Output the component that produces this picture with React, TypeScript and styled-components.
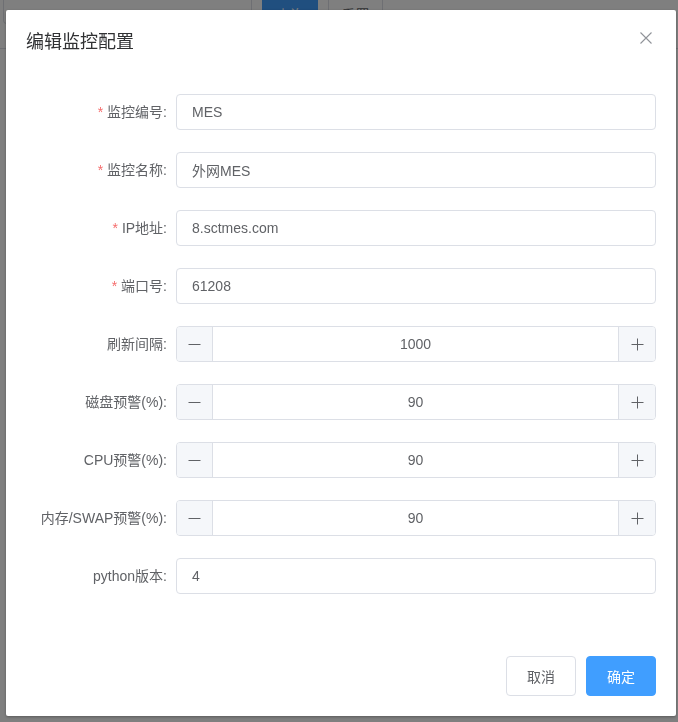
import React from "react";
import styled, { createGlobalStyle } from "styled-components";

const Global = createGlobalStyle`
  html, body { margin: 0; padding: 0; background: #fff; }
  body {
    font-family: "Liberation Sans", "Noto Sans CJK SC", sans-serif;
    width: 678px; height: 722px; overflow: hidden;
  }
  * { box-sizing: border-box; }
`;

const Page = styled.div`
  width: 678px;
  height: 722px;
  background: #fff;
`;

const SearchBar = styled.div`
  height: 49px;
  border-bottom: 1px solid #dcdfe6;
  display: flex;
  align-items: flex-start;
  padding-left: 3px;
  gap: 10px;
`;

const BgInput = styled.div`
  width: 249px;
  height: 24px;
  border: 1px solid #dcdfe6;
  border-top: none;
  border-radius: 0 0 4px 4px;
`;

const BgButtons = styled.div`
  display: flex;
  align-items: flex-start;
  gap: 10px;
`;

const BgButton = styled.div<{ $primary?: boolean }>`
  width: ${(p) => (p.$primary ? 56 : 55)}px;
  height: 26px;
  border: 1px solid ${(p) => (p.$primary ? "#409eff" : "#dcdfe6")};
  border-top: none;
  background: ${(p) => (p.$primary ? "#409eff" : "#fff")};
  color: ${(p) => (p.$primary ? "#fff" : "#606266")};
  border-radius: 0 0 3px 3px;
  font-size: 14px;
  display: flex;
  align-items: center;
  justify-content: center;
  padding-top: 2px;
`;

const Overlay = styled.div`
  position: fixed;
  inset: 0;
  background: rgba(0, 0, 0, 0.5);
  display: flex;
  justify-content: flex-start;
  align-items: flex-start;
  padding: 10px 0 0 6px;
`;

const Dialog = styled.div`
  width: 670px;
  background: #fff;
  border-radius: 2px;
  box-shadow: 0 1px 3px rgba(0, 0, 0, 0.3);
`;

const Header = styled.div`
  padding: 20px 20px 10px;
  display: flex;
  align-items: flex-start;
  justify-content: space-between;
`;

const Title = styled.span`
  font-size: 18px;
  line-height: 24px;
  color: #303133;
`;

const Close = styled.button`
  border: none;
  background: none;
  padding: 0;
  width: 16px;
  height: 16px;
  display: flex;
  align-items: center;
  justify-content: center;
  cursor: pointer;
  margin-top: 0;
  margin-right: 2px;
`;

const Body = styled.div`
  padding: 30px 20px;
`;

const Item = styled.div`
  display: flex;
  align-items: center;
  margin-bottom: 22px;
  height: 36px;
`;

const Label = styled.label`
  width: 150px;
  padding-right: 9px;
  text-align: right;
  font-size: 14px;
  color: #606266;
  line-height: 36px;
  white-space: nowrap;
`;

const Star = styled.span`
  color: #f56c6c;
  margin-right: 4px;
`;

const Input = styled.input`
  flex: 1;
  height: 36px;
  border: 1px solid #dcdfe6;
  border-radius: 4px;
  padding: 0 15px;
  font-size: 14px;
  color: #606266;
  font-family: inherit;
  outline: none;
  background: #fff;
`;

const NumberBox = styled.div`
  flex: 1;
  height: 36px;
  border: 1px solid #dcdfe6;
  border-radius: 4px;
  display: flex;
  overflow: hidden;
`;

const Step = styled.span<{ $side: "left" | "right" }>`
  width: ${(p) => (p.$side === "left" ? 36 : 37)}px;
  background: #f5f7fa;
  display: flex;
  align-items: center;
  justify-content: center;
  ${(p) => (p.$side === "left" ? "border-right" : "border-left")}: 1px solid #dcdfe6;
`;

const NumberValue = styled.span`
  flex: 1;
  text-align: center;
  font-size: 14px;
  color: #606266;
  line-height: 34px;
`;

const Footer = styled.div`
  padding: 10px 20px 20px;
  display: flex;
  justify-content: flex-end;
  gap: 10px;
`;

const Button = styled.button<{ $primary?: boolean }>`
  height: 40px;
  width: 70px;
  border-radius: 4px;
  font-size: 14px;
  font-family: inherit;
  border: 1px solid ${(p) => (p.$primary ? "#409eff" : "#dcdfe6")};
  background: ${(p) => (p.$primary ? "#409eff" : "#fff")};
  color: ${(p) => (p.$primary ? "#fff" : "#606266")};
  cursor: pointer;
`;

const Minus = () => (
  <svg width="13" height="13" viewBox="0 0 13 13">
    <line x1="0.5" y1="6.5" x2="12.5" y2="6.5" stroke="#606266" strokeWidth="1" />
  </svg>
);

const Plus = () => (
  <svg width="13" height="13" viewBox="0 0 13 13">
    <line x1="0.5" y1="6.5" x2="12.5" y2="6.5" stroke="#606266" strokeWidth="1" />
    <line x1="6.5" y1="0.5" x2="6.5" y2="12.5" stroke="#606266" strokeWidth="1" />
  </svg>
);

const CloseIcon = () => (
  <svg width="12" height="12" viewBox="0 0 12 12">
    <path d="M0.5 0.5 L11.5 11.5 M11.5 0.5 L0.5 11.5" stroke="#909399" strokeWidth="1.1" />
  </svg>
);

type Field =
  | { kind: "text"; label: string; value: string; required?: boolean }
  | { kind: "number"; label: string; value: number };

const fields: Field[] = [
  { kind: "text", label: "监控编号:", value: "MES", required: true },
  { kind: "text", label: "监控名称:", value: "外网MES", required: true },
  { kind: "text", label: "IP地址:", value: "8.sctmes.com", required: true },
  { kind: "text", label: "端口号:", value: "61208", required: true },
  { kind: "number", label: "刷新间隔:", value: 1000 },
  { kind: "number", label: "磁盘预警(%):", value: 90 },
  { kind: "number", label: "CPU预警(%):", value: 90 },
  { kind: "number", label: "内存/SWAP预警(%):", value: 90 },
  { kind: "text", label: "python版本:", value: "4" },
];

export default function App() {
  return (
    <>
      <Global />
      <Page>
        <SearchBar>
          <BgInput />
          <BgButtons>
            <BgButton $primary>查询</BgButton>
            <BgButton>重置</BgButton>
          </BgButtons>
        </SearchBar>
      </Page>
      <Overlay>
        <Dialog>
          <Header>
            <Title>编辑监控配置</Title>
            <Close aria-label="close">
              <CloseIcon />
            </Close>
          </Header>
          <Body>
            {fields.map((f) => (
              <Item key={f.label}>
                <Label>
                  {f.kind === "text" && f.required && <Star>*</Star>}
                  {f.label}
                </Label>
                {f.kind === "text" ? (
                  <Input defaultValue={f.value} />
                ) : (
                  <NumberBox>
                    <Step $side="left">
                      <Minus />
                    </Step>
                    <NumberValue>{f.value}</NumberValue>
                    <Step $side="right">
                      <Plus />
                    </Step>
                  </NumberBox>
                )}
              </Item>
            ))}
          </Body>
          <Footer>
            <Button>取消</Button>
            <Button $primary>确定</Button>
          </Footer>
        </Dialog>
      </Overlay>
    </>
  );
}
